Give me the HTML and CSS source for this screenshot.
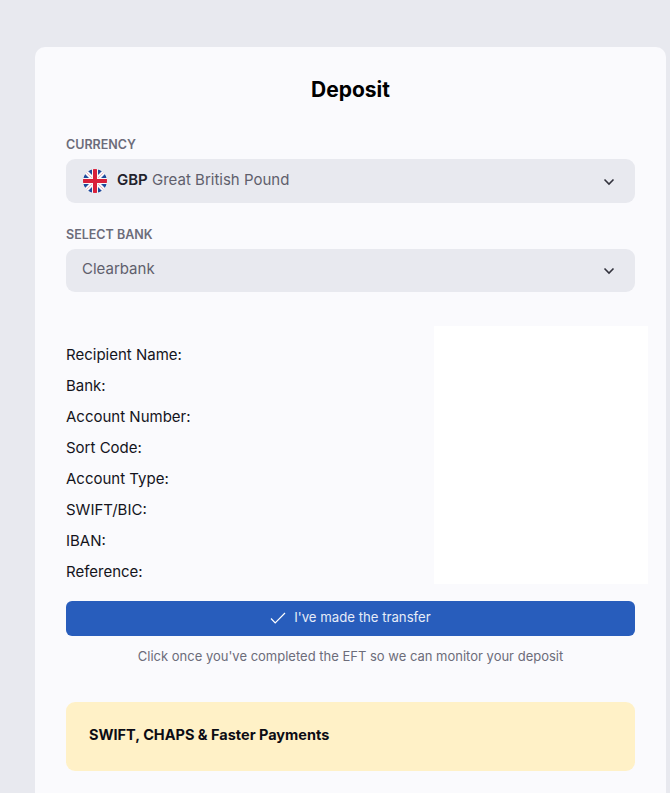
FILE: index.html
```html
<!DOCTYPE html>
<html lang="en">
<head>
  <meta charset="UTF-8" />
  <meta name="viewport" content="width=device-width, initial-scale=1.0"/>
  <title>Deposit</title>
  <link rel="stylesheet" href="styles.css">
</head>
<body>
  <main class="card">
    <h1>Deposit</h1>

    <div class="field">
      <div class="field-label">CURRENCY</div>
      <div class="select">
        <svg class="flag" width="24" height="24" viewBox="0 0 24 24">
          <defs>
            <clipPath id="flag-clip"><circle cx="12" cy="12" r="12"/></clipPath>
          </defs>
          <g clip-path="url(#flag-clip)">
            <rect width="24" height="24" fill="#f8f8fa"/>
            <path d="M5 2 9 0 9 6ZM19 2 15 0 15 6ZM2 5 0 9 6 9ZM22 5 24 9 18 9ZM2 19 0 15 6 15ZM22 19 24 15 18 15ZM5 22 9 24 9 18ZM19 22 15 24 15 18Z" fill="#1f4a9c"/>
            <path d="M3 3 9 9M21 3 15 9M3 21 9 15M21 21 15 15" stroke="#ee9aa6" stroke-width=".7"/>
            <rect x="10" width="4" height="24" fill="#d8203a"/>
            <rect y="10" width="24" height="4" fill="#d8203a"/>
          </g>
        </svg>
        <span class="select-text"><b>GBP</b> Great British Pound</span>
        <svg class="chevron" width="12" height="8" viewBox="0 0 12 8"><path d="M1.5 1.5 6 6 10.5 1.5"/></svg>
      </div>
    </div>

    <div class="field">
      <div class="field-label">SELECT BANK</div>
      <div class="select">
        <span class="select-text">Clearbank</span>
        <svg class="chevron" width="12" height="8" viewBox="0 0 12 8"><path d="M1.5 1.5 6 6 10.5 1.5"/></svg>
      </div>
    </div>

    <div class="details">
      <ul class="detail-list">
        <li>Recipient Name:</li>
        <li>Bank:</li>
        <li>Account Number:</li>
        <li>Sort Code:</li>
        <li>Account Type:</li>
        <li>SWIFT/BIC:</li>
        <li>IBAN:</li>
        <li>Reference:</li>
      </ul>
      <div class="qr-box"></div>
    </div>

    <button class="btn-primary">
      <svg width="16" height="12" viewBox="0 0 16 12"><path d="M1 6.5 5.2 11 15 1"/></svg>
      <span>I've made the transfer</span>
    </button>
    <p class="hint">Click once you've completed the EFT so we can monitor your deposit</p>

    <div class="notice">SWIFT, CHAPS &amp; Faster Payments</div>
  </main>
</body>
</html>
```

FILE: styles.css
```css
html, body {
  height: 100%;
  overflow: hidden;
}

body {
  margin: 0;
  background-color: #e8e9ef;
  font-family: 'Inter', 'Lato', sans-serif;
  color: #14141c;
}

.card {
  margin: 47px 4px 0 35px;
  padding: 30px 31px 40px;
  background-color: #fafafd;
  border-radius: 10px 10px 0 0;
}

h1 {
  margin: 0 0 34px;
  font-size: 21px;
  line-height: 26px;
  font-weight: 700;
  color: #000;
  text-align: center;
}

.field {
  margin-bottom: 24px;
}

.field-label {
  margin-bottom: 6px;
  font-size: 12.5px;
  line-height: 16px;
  font-weight: 600;
  color: #6c6c7a;
}

.select {
  display: flex;
  align-items: center;
  height: 43.5px;
  padding: 0 20px 0 16px;
  background-color: #e8e9ef;
  border-radius: 9px;
  box-sizing: border-box;
}

.flag {
  margin: 0 10px 0 1px;
}

.select-text {
  flex: 1;
  padding-bottom: 3px;
  font-size: 15px;
  color: #5f5f6c;
}

.select-text b {
  font-weight: 600;
  color: #22222c;
}

.chevron {
  margin-top: 2px;
}

.chevron path {
  fill: none;
  stroke: #33333d;
  stroke-width: 1.6;
}

.details {
  display: flex;
  justify-content: space-between;
  margin: 34px -13px 14px 0;
}

.detail-list {
  margin: 0;
  padding: 13px 0 0;
  list-style: none;
  font-size: 15px;
  line-height: 31px;
  color: #14141c;
}

.qr-box {
  width: 214px;
  height: 258px;
  background-color: #fff;
}

.btn-primary {
  display: flex;
  align-items: center;
  justify-content: center;
  gap: 8px;
  width: 100%;
  height: 34.5px;
  border: none;
  border-radius: 6px;
  background-color: #285dbc;
  color: #e6ecf8;
  font-family: inherit;
  font-size: 13.2px;
}

.btn-primary span {
  padding-bottom: 3px;
}

.btn-primary path {
  fill: none;
  stroke: #fff;
  stroke-width: 1.2;
}

.hint {
  margin: 12px 0 37.5px;
  font-size: 13px;
  line-height: 17px;
  color: #6c6c7a;
  text-align: center;
}

.notice {
  padding: 23px 23px;
  height: 69px;
  box-sizing: border-box;
  background-color: #fff1c7;
  border-radius: 9px;
  font-size: 14.5px;
  line-height: 20px;
  font-weight: 700;
  color: #0c0c14;
}
```
